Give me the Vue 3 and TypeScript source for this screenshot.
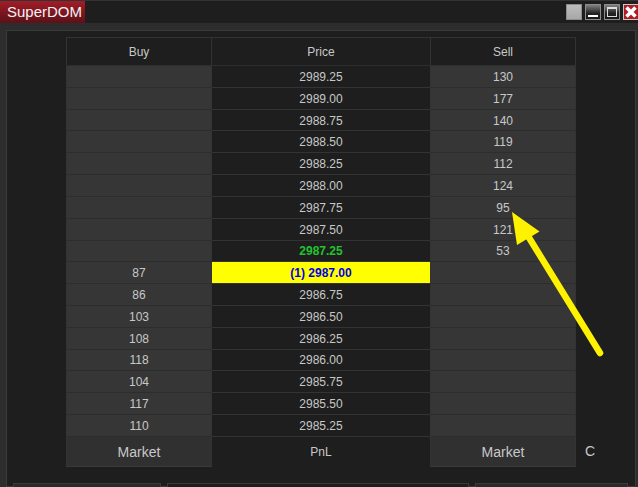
<script setup lang="ts">
interface Row { buy: string; price: string; sell: string; kind?: string }
const rows: Row[] = [
  { buy: '', price: '2989.25', sell: '130' },
  { buy: '', price: '2989.00', sell: '177' },
  { buy: '', price: '2988.75', sell: '140' },
  { buy: '', price: '2988.50', sell: '119' },
  { buy: '', price: '2988.25', sell: '112' },
  { buy: '', price: '2988.00', sell: '124' },
  { buy: '', price: '2987.75', sell: '95' },
  { buy: '', price: '2987.50', sell: '121' },
  { buy: '', price: '2987.25', sell: '53', kind: 'last' },
  { buy: '87', price: '(1) 2987.00', sell: '', kind: 'pos' },
  { buy: '86', price: '2986.75', sell: '' },
  { buy: '103', price: '2986.50', sell: '' },
  { buy: '108', price: '2986.25', sell: '' },
  { buy: '118', price: '2986.00', sell: '' },
  { buy: '104', price: '2985.75', sell: '' },
  { buy: '117', price: '2985.50', sell: '' },
  { buy: '110', price: '2985.25', sell: '' },
]
</script>

<template>
  <div class="win">
    <header class="bar">
      <div class="tab">SuperDOM</div>
      <div class="btns">
        <span class="wb wb-plain"></span>
        <span class="wb wb-dark"><i class="min"></i></span>
        <span class="wb wb-dark"><i class="max"></i></span>
        <span class="wb wb-close">
          <svg width="14" height="14" viewBox="0 0 14 14"><path d="M2.5 2.5 11.5 11.5M11.5 2.5 2.5 11.5" stroke="#fff" stroke-width="3.6" fill="none"/></svg>
        </span>
      </div>
    </header>
    <div class="frame">
      <div class="panel">
        <div class="dom">
          <div class="table">
            <div class="c head">Buy</div>
            <div class="c head">Price</div>
            <div class="c head last-col">Sell</div>
            <template v-for="r in rows" :key="r.price">
              <div class="c side">{{ r.buy }}</div>
              <div class="c price" :class="r.kind">{{ r.price }}</div>
              <div class="c side last-col">{{ r.sell }}</div>
            </template>
            <div class="c foot side">Market</div>
            <div class="c foot pnl">PnL</div>
            <div class="c foot side last-col">Market</div>
          </div>
          <div class="close-all">C</div>
        </div>
        <div class="actions">
          <div class="act act-a"></div>
          <div class="act act-b"></div>
          <div class="act act-c"></div>
        </div>
      </div>
    </div>
    <svg class="arrow" width="638" height="487" viewBox="0 0 638 487">
      <line x1="600" y1="353" x2="528" y2="236" stroke="#fff200" stroke-width="6.5" stroke-linecap="round"/>
      <polygon points="512,212 539.5,231.5 517,245" fill="#fff200"/>
    </svg>
  </div>
</template>

<style>
html, body { margin: 0; background: #1e1e1e; overflow: hidden; }
</style>

<style scoped>
.win {
  position: relative;
  width: 638px;
  height: 487px;
  overflow: hidden;
  background: #2d2d2e;
  font-family: "Liberation Sans", Arial, sans-serif;
  color: #c8c8c8;
  display: flex;
  flex-direction: column;
}
.bar {
  height: 23px;
  flex: none;
  box-sizing: border-box;
  border-top: 1px solid #333;
  background: #1e1e1e;
  display: flex;
  justify-content: space-between;
}
.tab {
  width: 85px;
  box-sizing: border-box;
  padding-left: 7px;
  font-size: 15px;
  line-height: 22px;
  color: #f2f2f2;
  background: linear-gradient(#a01c28, #5e1018);
}
.btns { display: flex; gap: 3px; padding-top: 3px; margin-right: -1px; }
.wb {
  width: 16px;
  height: 16px;
  box-sizing: border-box;
  border: 1px solid #8c8c8c;
  display: flex;
  align-items: center;
  justify-content: center;
}
.wb-plain { background: linear-gradient(#bdbdbd, #a8a8a8); }
.wb-dark { background: linear-gradient(#808080, #222 60%, #1a1a1a); }
.wb-close { background: #b01c26; border-color: #c8c8c8; }
.min { width: 10px; height: 2px; background: #fff; margin-top: 7px; }
.max { width: 10px; height: 10px; box-sizing: border-box; border: 1px solid #ddd; border-top-width: 2px; }
.frame { flex: 1; min-height: 0; padding: 7px 2px 0 6px; }
.panel {
  height: 100%;
  box-sizing: border-box;
  border: 1px solid #3a3a3b;
  background: #1e1e1e;
  padding: 6px 0 0 6px;
}
.dom { display: flex; margin-left: 53px; }
.table {
  display: grid;
  grid-template-columns: 145px 219px 146px;
  grid-template-rows: 28px repeat(17, 21.82px) 30px;
  height: 429px;
  border-top: 1px solid #333;
  box-sizing: border-box;
}
.c {
  box-sizing: border-box;
  display: flex;
  align-items: center;
  justify-content: center;
  font-size: 12px;
  border-bottom: 1px solid #2d2d2e;
  border-left: 1px solid #333;
  padding-top: 1px;
}
.last-col { border-right: 1px solid #333; }
.head { background: #1e1e1e; }
.side { background: #363636; }
.price { background: #1e1e1e; border-bottom-color: #333; }
.last { color: #22c32e; font-weight: 700; }
.pos { background: #ffff00; color: #0000e6; font-weight: 700; }
.foot { font-size: 14px; background: #303031; border-bottom-color: #3a3a3a; }
.pnl { font-size: 12px; background: #1e1e1e; border-bottom: 0; }
.close-all { font-size: 14px; padding: 406px 0 0 9px; line-height: 16px; }
.actions { display: flex; gap: 6px; margin-top: 17px; }
.act { height: 20px; flex: none; box-sizing: border-box; border: 1px solid #3a3a3b; background: #2a2a2b; }
.act-a { width: 148px; }
.act-b { width: 302px; background: #1e1e1e; }
.act-c { width: 153px; }
.arrow { position: absolute; left: 0; top: 0; pointer-events: none; }
</style>
